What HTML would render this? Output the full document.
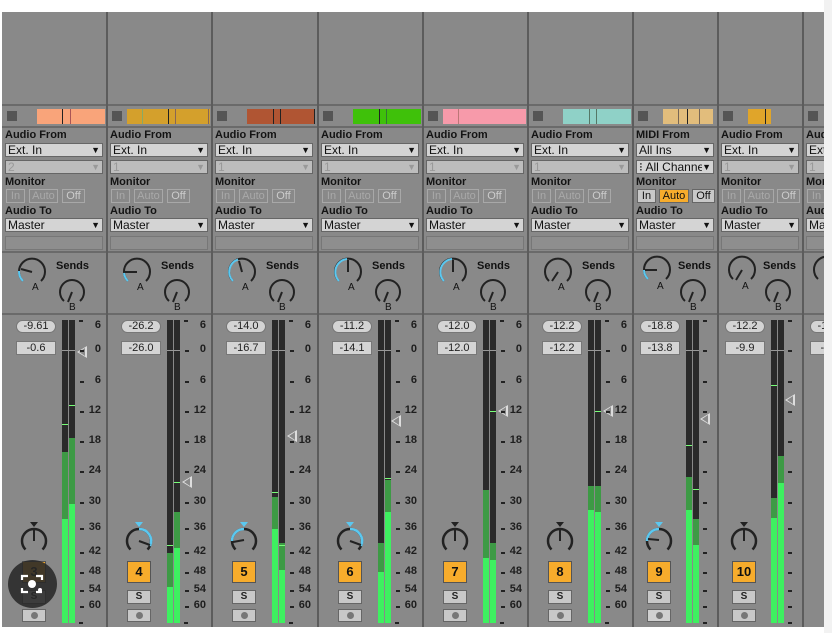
<!DOCTYPE html>
<html><head><meta charset="utf-8"><style>
*{margin:0;padding:0;box-sizing:border-box}
body{width:832px;height:633px;background:#fff;position:relative;overflow:hidden;font-family:"Liberation Sans",sans-serif}
#bg{position:absolute;left:2px;top:12px;width:822px;height:615px;background:#898989}
#rs{position:absolute;left:824px;top:0;width:8px;height:633px;background:#f2f2f2}
.col{position:absolute;top:0;height:627px;overflow:hidden}
.hl{position:absolute;left:2px;width:822px;height:2px;background:#6a6a6a}
.vl{position:absolute;top:12px;width:2px;height:615px;background:#5c5c5c}
.a{position:absolute}
.sq{position:absolute;left:5px;top:111px;width:10px;height:10px;background:#555}
.clip{position:absolute;top:109px;height:15px}
.clip i{position:absolute;top:0;width:1px;height:15px;background:#222}
.lb{position:absolute;left:3px;font:bold 11px "Liberation Sans",sans-serif;color:#141414;white-space:nowrap}
.dd{position:absolute;left:3px;width:98px;height:14px;background:#d4d4d4;border:1px solid #666;font:12px/12px "Liberation Sans",sans-serif;color:#111;padding-left:2px;white-space:nowrap;overflow:hidden}
.dd b{position:absolute;right:2px;top:0;font-size:9px;background:inherit}
.dis{background:#bdbdbd;color:#999}
.em{position:absolute;left:3px;top:236px;width:98px;height:14px;border:1px solid #777;background:#8e8e8e}
.bt{position:absolute;top:189px;height:14px;border:1px solid #a8a8a8;font:11px/12px "Liberation Sans",sans-serif;color:#a9a9a9;text-align:center}
.pill{position:absolute;left:14px;top:320px;width:40px;height:13px;border-radius:7px;background:#d4d4d4;border:1px solid #777;font:11px/11px "Liberation Sans",sans-serif;text-align:center;color:#222}
.box{position:absolute;left:14px;top:341px;width:40px;height:14px;background:#d4d4d4;border:1px solid #777;font:11px/12px "Liberation Sans",sans-serif;text-align:center;color:#222}
.m{position:absolute;top:320px;width:6px;height:303px;background:#2a2a2a;overflow:hidden}
.m .d{position:absolute;left:0;width:6px;bottom:0;background:#3d9a45}
.m .g{position:absolute;left:0;width:6px;bottom:0;background:#3ef060}
.m .p{position:absolute;left:0;width:6px;height:1px;background:#7f7}
.zl{position:absolute;top:350px;height:1px;background:#999}
.tk{position:absolute;width:4px;height:2px;background:#222}
.n{position:absolute;width:24px;text-align:right;font:bold 11px "Liberation Sans",sans-serif;color:#1e1e1e}
.num{position:absolute;left:20px;top:561px;width:24px;height:22px;background:#f7ac2c;border:1px solid #555;font:bold 13px/20px "Liberation Sans",sans-serif;text-align:center;color:#111}
.s{position:absolute;left:20px;top:590px;width:24px;height:14px;background:#c8c8c8;border:1px solid #666;font:bold 10px/12px "Liberation Sans",sans-serif;text-align:center;color:#222}
.r{position:absolute;left:20px;top:609px;width:24px;height:13px;background:#c8c8c8;border:1px solid #666}
.r:after{content:"";position:absolute;left:8px;top:2px;width:7px;height:7px;border-radius:50%;background:#777}
.tri{position:absolute;width:0;height:0;border-top:6px solid transparent;border-bottom:6px solid transparent;border-right:10px solid #ddd}
.tri:after{content:"";position:absolute;left:2px;top:-4px;border-top:4px solid transparent;border-bottom:4px solid transparent;border-right:6px solid #8a8a8a}
</style></head><body>
<div id="bg"></div><div id="rs"></div>

<div class="col" style="left:2px;width:105px">
<div class="sq"></div><div class="clip" style="left:35px;width:68px;background:#f9a47a"><i style="left:25px"></i><i style="left:33px;background:#a55"></i></div>
<div class="lb" style="top:129px">Audio From</div><div class="dd" style="top:143px">Ext. In<b>▼</b></div>
<div class="dd dis" style="top:160px">2<b>▼</b></div>
<div class="lb" style="top:176px">Monitor</div>
<div class="bt" style="left:4px;width:19px">In</div><div class="bt" style="left:27px;width:29px">Auto</div><div class="bt" style="left:60px;width:23px;color:#ccc">Off</div>
<div class="lb" style="top:205px">Audio To</div><div class="dd" style="top:218px">Master<b>▼</b></div><div class="em"></div>
<svg class="a" style="left:0;top:255px" width="105" height="58"><path d="M21 26 A13 13 0 1 1 39 26" fill="none" stroke="#222" stroke-width="2"/><path d="M21 26 A13 13 0 0 1 17 16" fill="none" stroke="#5bc8f0" stroke-width="2"/><line x1="30" y1="17" x2="19" y2="14" stroke="#222" stroke-width="2"/><text x="30" y="35" font-size="10" font-family="Liberation Sans" fill="#111">A</text><text x="54" y="14" font-size="11" font-weight="bold" font-family="Liberation Sans" fill="#111">Sends</text><path d="M62 46 A12 12 0 1 1 78 46" fill="none" stroke="#222" stroke-width="2"/><line x1="70" y1="37" x2="66" y2="47" stroke="#222" stroke-width="2"/><text x="67" y="55" font-size="10" font-family="Liberation Sans" fill="#111">B</text></svg>
<div class="pill">-9.61</div><div class="box">-0.6</div>
<div class="m" style="left:60px"><div class="d" style="height:171px"></div><div class="g" style="height:104px"></div><div class="p" style="top:104px"></div></div>
<div class="m" style="left:67px"><div class="d" style="height:185px"></div><div class="g" style="height:119px"></div><div class="p" style="top:85px"></div></div>
<div class="zl" style="left:60px;width:13px"></div><div class="tri" style="left:75px;top:346px"></div>
<div class="tk" style="left:77px;top:320px"></div><div class="tk" style="left:77px;top:622px"></div>
<div class="n" style="left:75px;top:319px">6</div><div class="tk" style="left:78px;top:350px"></div><div class="n" style="left:75px;top:343px">0</div><div class="tk" style="left:78px;top:381px"></div><div class="n" style="left:75px;top:374px">6</div><div class="tk" style="left:78px;top:411px"></div><div class="n" style="left:75px;top:404px">12</div><div class="tk" style="left:78px;top:441px"></div><div class="n" style="left:75px;top:434px">18</div><div class="tk" style="left:78px;top:471px"></div><div class="n" style="left:75px;top:464px">24</div><div class="tk" style="left:78px;top:502px"></div><div class="n" style="left:75px;top:495px">30</div><div class="tk" style="left:78px;top:528px"></div><div class="n" style="left:75px;top:521px">36</div><div class="tk" style="left:78px;top:552px"></div><div class="n" style="left:75px;top:545px">42</div><div class="tk" style="left:78px;top:572px"></div><div class="n" style="left:75px;top:565px">48</div><div class="tk" style="left:78px;top:590px"></div><div class="n" style="left:75px;top:583px">54</div><div class="tk" style="left:78px;top:606px"></div><div class="n" style="left:75px;top:599px">60</div>
<svg class="a" style="left:14px;top:516px" width="40" height="42"><polygon points="14,6 22,6 18,11" fill="#222"/><path d="M9.5 33.5 A12 12 0 1 1 26.5 33.5" fill="none" stroke="#222" stroke-width="2.5"/><line x1="18" y1="12" x2="18" y2="25" stroke="#222" stroke-width="2"/></svg>
<div class="num">3</div><div class="s">S</div><div class="r"></div>
</div>

<div class="col" style="left:107px;width:105px">
<div class="sq"></div><div class="clip" style="left:20px;width:83px;background:#d4a02c"><i style="left:15px;background:#8a6"></i><i style="left:41px"></i><i style="left:48px;background:#865"></i><i style="left:81px;background:#865"></i></div>
<div class="lb" style="top:129px">Audio From</div><div class="dd" style="top:143px">Ext. In<b>▼</b></div>
<div class="dd dis" style="top:160px">1<b>▼</b></div>
<div class="lb" style="top:176px">Monitor</div>
<div class="bt" style="left:4px;width:19px">In</div><div class="bt" style="left:27px;width:29px">Auto</div><div class="bt" style="left:60px;width:23px;color:#ccc">Off</div>
<div class="lb" style="top:205px">Audio To</div><div class="dd" style="top:218px">Master<b>▼</b></div><div class="em"></div>
<svg class="a" style="left:0;top:255px" width="105" height="58"><path d="M21 26 A13 13 0 1 1 39 26" fill="none" stroke="#222" stroke-width="2"/><path d="M21 26 A13 13 0 0 1 17 18" fill="none" stroke="#5bc8f0" stroke-width="2"/><line x1="30" y1="17" x2="18" y2="17" stroke="#222" stroke-width="2"/><text x="30" y="35" font-size="10" font-family="Liberation Sans" fill="#111">A</text><text x="54" y="14" font-size="11" font-weight="bold" font-family="Liberation Sans" fill="#111">Sends</text><path d="M62 46 A12 12 0 1 1 78 46" fill="none" stroke="#222" stroke-width="2"/><line x1="70" y1="37" x2="66" y2="47" stroke="#222" stroke-width="2"/><text x="67" y="55" font-size="10" font-family="Liberation Sans" fill="#111">B</text></svg>
<div class="pill">-26.2</div><div class="box">-26.0</div>
<div class="m" style="left:60px"><div class="d" style="height:70px"></div><div class="g" style="height:36px"></div><div class="p" style="top:225px"></div></div>
<div class="m" style="left:67px"><div class="d" style="height:111px"></div><div class="g" style="height:75px"></div><div class="p" style="top:162px"></div></div>
<div class="zl" style="left:60px;width:13px"></div><div class="tri" style="left:75px;top:476px"></div>
<div class="tk" style="left:77px;top:320px"></div><div class="tk" style="left:77px;top:622px"></div>
<div class="n" style="left:75px;top:319px">6</div><div class="tk" style="left:78px;top:350px"></div><div class="n" style="left:75px;top:343px">0</div><div class="tk" style="left:78px;top:381px"></div><div class="n" style="left:75px;top:374px">6</div><div class="tk" style="left:78px;top:411px"></div><div class="n" style="left:75px;top:404px">12</div><div class="tk" style="left:78px;top:441px"></div><div class="n" style="left:75px;top:434px">18</div><div class="tk" style="left:78px;top:471px"></div><div class="n" style="left:75px;top:464px">24</div><div class="tk" style="left:78px;top:502px"></div><div class="n" style="left:75px;top:495px">30</div><div class="tk" style="left:78px;top:528px"></div><div class="n" style="left:75px;top:521px">36</div><div class="tk" style="left:78px;top:552px"></div><div class="n" style="left:75px;top:545px">42</div><div class="tk" style="left:78px;top:572px"></div><div class="n" style="left:75px;top:565px">48</div><div class="tk" style="left:78px;top:590px"></div><div class="n" style="left:75px;top:583px">54</div><div class="tk" style="left:78px;top:606px"></div><div class="n" style="left:75px;top:599px">60</div>
<svg class="a" style="left:14px;top:516px" width="40" height="42"><polygon points="14,6 22,6 18,11" fill="#5bc8f0"/><path d="M9.5 33.5 A12 12 0 1 1 26.5 33.5" fill="none" stroke="#222" stroke-width="2.5"/><path d="M18 13 A12 12 0 0 1 29 30" fill="none" stroke="#5bc8f0" stroke-width="2.5"/><line x1="18" y1="25" x2="29" y2="29" stroke="#222" stroke-width="2"/></svg>
<div class="num">4</div><div class="s">S</div><div class="r"></div>
</div>

<div class="col" style="left:212px;width:106px">
<div class="sq"></div><div class="clip" style="left:35px;width:68px;background:#b05533"><i style="left:26px"></i><i style="left:33px"></i><i style="left:67px"></i></div>
<div class="lb" style="top:129px">Audio From</div><div class="dd" style="top:143px">Ext. In<b>▼</b></div>
<div class="dd dis" style="top:160px">1<b>▼</b></div>
<div class="lb" style="top:176px">Monitor</div>
<div class="bt" style="left:4px;width:19px">In</div><div class="bt" style="left:27px;width:29px">Auto</div><div class="bt" style="left:60px;width:23px;color:#ccc">Off</div>
<div class="lb" style="top:205px">Audio To</div><div class="dd" style="top:218px">Master<b>▼</b></div><div class="em"></div>
<svg class="a" style="left:0;top:255px" width="105" height="58"><path d="M21 26 A13 13 0 1 1 39 26" fill="none" stroke="#222" stroke-width="2"/><path d="M21 26 A13 13 0 0 1 26 4.5" fill="none" stroke="#5bc8f0" stroke-width="2"/><line x1="30" y1="17" x2="27" y2="6" stroke="#222" stroke-width="2"/><text x="30" y="35" font-size="10" font-family="Liberation Sans" fill="#111">A</text><text x="54" y="14" font-size="11" font-weight="bold" font-family="Liberation Sans" fill="#111">Sends</text><path d="M62 46 A12 12 0 1 1 78 46" fill="none" stroke="#222" stroke-width="2"/><line x1="70" y1="37" x2="66" y2="47" stroke="#222" stroke-width="2"/><text x="67" y="55" font-size="10" font-family="Liberation Sans" fill="#111">B</text></svg>
<div class="pill">-14.0</div><div class="box">-16.7</div>
<div class="m" style="left:60px"><div class="d" style="height:126px"></div><div class="g" style="height:94px"></div><div class="p" style="top:172px"></div></div>
<div class="m" style="left:67px"><div class="d" style="height:80px"></div><div class="g" style="height:53px"></div><div class="p" style="top:225px"></div></div>
<div class="zl" style="left:60px;width:13px"></div><div class="tri" style="left:75px;top:430px"></div>
<div class="tk" style="left:77px;top:320px"></div><div class="tk" style="left:77px;top:622px"></div>
<div class="n" style="left:75px;top:319px">6</div><div class="tk" style="left:78px;top:350px"></div><div class="n" style="left:75px;top:343px">0</div><div class="tk" style="left:78px;top:381px"></div><div class="n" style="left:75px;top:374px">6</div><div class="tk" style="left:78px;top:411px"></div><div class="n" style="left:75px;top:404px">12</div><div class="tk" style="left:78px;top:441px"></div><div class="n" style="left:75px;top:434px">18</div><div class="tk" style="left:78px;top:471px"></div><div class="n" style="left:75px;top:464px">24</div><div class="tk" style="left:78px;top:502px"></div><div class="n" style="left:75px;top:495px">30</div><div class="tk" style="left:78px;top:528px"></div><div class="n" style="left:75px;top:521px">36</div><div class="tk" style="left:78px;top:552px"></div><div class="n" style="left:75px;top:545px">42</div><div class="tk" style="left:78px;top:572px"></div><div class="n" style="left:75px;top:565px">48</div><div class="tk" style="left:78px;top:590px"></div><div class="n" style="left:75px;top:583px">54</div><div class="tk" style="left:78px;top:606px"></div><div class="n" style="left:75px;top:599px">60</div>
<svg class="a" style="left:14px;top:516px" width="40" height="42"><polygon points="14,6 22,6 18,11" fill="#5bc8f0"/><path d="M9.5 33.5 A12 12 0 1 1 26.5 33.5" fill="none" stroke="#222" stroke-width="2.5"/><path d="M18 13 A12 12 0 0 0 6 25" fill="none" stroke="#5bc8f0" stroke-width="2.5"/><line x1="18" y1="24" x2="7" y2="26" stroke="#222" stroke-width="2"/></svg>
<div class="num">5</div><div class="s">S</div><div class="r"></div>
</div>

<div class="col" style="left:318px;width:105px">
<div class="sq"></div><div class="clip" style="left:35px;width:68px;background:#3fc10a"><i style="left:26px"></i><i style="left:33px;background:#373"></i></div>
<div class="lb" style="top:129px">Audio From</div><div class="dd" style="top:143px">Ext. In<b>▼</b></div>
<div class="dd dis" style="top:160px">1<b>▼</b></div>
<div class="lb" style="top:176px">Monitor</div>
<div class="bt" style="left:4px;width:19px">In</div><div class="bt" style="left:27px;width:29px">Auto</div><div class="bt" style="left:60px;width:23px;color:#ccc">Off</div>
<div class="lb" style="top:205px">Audio To</div><div class="dd" style="top:218px">Master<b>▼</b></div><div class="em"></div>
<svg class="a" style="left:0;top:255px" width="105" height="58"><path d="M21 26 A13 13 0 1 1 39 26" fill="none" stroke="#222" stroke-width="2"/><path d="M21 26 A13 13 0 0 1 29 4" fill="none" stroke="#5bc8f0" stroke-width="2"/><line x1="30" y1="17" x2="30" y2="5" stroke="#222" stroke-width="2"/><text x="30" y="35" font-size="10" font-family="Liberation Sans" fill="#111">A</text><text x="54" y="14" font-size="11" font-weight="bold" font-family="Liberation Sans" fill="#111">Sends</text><path d="M62 46 A12 12 0 1 1 78 46" fill="none" stroke="#222" stroke-width="2"/><line x1="70" y1="37" x2="66" y2="47" stroke="#222" stroke-width="2"/><text x="67" y="55" font-size="10" font-family="Liberation Sans" fill="#111">B</text></svg>
<div class="pill">-11.2</div><div class="box">-14.1</div>
<div class="m" style="left:60px"><div class="d" style="height:80px"></div><div class="g" style="height:51px"></div></div>
<div class="m" style="left:67px"><div class="d" style="height:143px"></div><div class="g" style="height:111px"></div><div class="p" style="top:158px"></div></div>
<div class="zl" style="left:60px;width:13px"></div><div class="tri" style="left:73px;top:415px"></div>
<div class="tk" style="left:77px;top:320px"></div><div class="tk" style="left:77px;top:622px"></div>
<div class="n" style="left:75px;top:319px">6</div><div class="tk" style="left:78px;top:350px"></div><div class="n" style="left:75px;top:343px">0</div><div class="tk" style="left:78px;top:381px"></div><div class="n" style="left:75px;top:374px">6</div><div class="tk" style="left:78px;top:411px"></div><div class="n" style="left:75px;top:404px">12</div><div class="tk" style="left:78px;top:441px"></div><div class="n" style="left:75px;top:434px">18</div><div class="tk" style="left:78px;top:471px"></div><div class="n" style="left:75px;top:464px">24</div><div class="tk" style="left:78px;top:502px"></div><div class="n" style="left:75px;top:495px">30</div><div class="tk" style="left:78px;top:528px"></div><div class="n" style="left:75px;top:521px">36</div><div class="tk" style="left:78px;top:552px"></div><div class="n" style="left:75px;top:545px">42</div><div class="tk" style="left:78px;top:572px"></div><div class="n" style="left:75px;top:565px">48</div><div class="tk" style="left:78px;top:590px"></div><div class="n" style="left:75px;top:583px">54</div><div class="tk" style="left:78px;top:606px"></div><div class="n" style="left:75px;top:599px">60</div>
<svg class="a" style="left:14px;top:516px" width="40" height="42"><polygon points="14,6 22,6 18,11" fill="#5bc8f0"/><path d="M9.5 33.5 A12 12 0 1 1 26.5 33.5" fill="none" stroke="#222" stroke-width="2.5"/><path d="M18 13 A12 12 0 0 1 29 30" fill="none" stroke="#5bc8f0" stroke-width="2.5"/><line x1="18" y1="25" x2="29" y2="29" stroke="#222" stroke-width="2"/></svg>
<div class="num">6</div><div class="s">S</div><div class="r"></div>
</div>

<div class="col" style="left:423px;width:105px">
<div class="sq"></div><div class="clip" style="left:20px;width:83px;background:#f79aaa"><i style="left:15px;background:#b77"></i></div>
<div class="lb" style="top:129px">Audio From</div><div class="dd" style="top:143px">Ext. In<b>▼</b></div>
<div class="dd dis" style="top:160px">1<b>▼</b></div>
<div class="lb" style="top:176px">Monitor</div>
<div class="bt" style="left:4px;width:19px">In</div><div class="bt" style="left:27px;width:29px">Auto</div><div class="bt" style="left:60px;width:23px;color:#ccc">Off</div>
<div class="lb" style="top:205px">Audio To</div><div class="dd" style="top:218px">Master<b>▼</b></div><div class="em"></div>
<svg class="a" style="left:0;top:255px" width="105" height="58"><path d="M21 26 A13 13 0 1 1 39 26" fill="none" stroke="#222" stroke-width="2"/><path d="M21 26 A13 13 0 0 1 29 4" fill="none" stroke="#5bc8f0" stroke-width="2"/><line x1="30" y1="17" x2="30" y2="5" stroke="#222" stroke-width="2"/><text x="30" y="35" font-size="10" font-family="Liberation Sans" fill="#111">A</text><text x="54" y="14" font-size="11" font-weight="bold" font-family="Liberation Sans" fill="#111">Sends</text><path d="M62 46 A12 12 0 1 1 78 46" fill="none" stroke="#222" stroke-width="2"/><line x1="70" y1="37" x2="66" y2="47" stroke="#222" stroke-width="2"/><text x="67" y="55" font-size="10" font-family="Liberation Sans" fill="#111">B</text></svg>
<div class="pill">-12.0</div><div class="box">-12.0</div>
<div class="m" style="left:60px"><div class="d" style="height:133px"></div><div class="g" style="height:65px"></div></div>
<div class="m" style="left:67px"><div class="d" style="height:80px"></div><div class="g" style="height:63px"></div><div class="p" style="top:91px"></div></div>
<div class="zl" style="left:60px;width:13px"></div><div class="tri" style="left:75px;top:405px"></div>
<div class="tk" style="left:77px;top:320px"></div><div class="tk" style="left:77px;top:622px"></div>
<div class="n" style="left:75px;top:319px">6</div><div class="tk" style="left:78px;top:350px"></div><div class="n" style="left:75px;top:343px">0</div><div class="tk" style="left:78px;top:381px"></div><div class="n" style="left:75px;top:374px">6</div><div class="tk" style="left:78px;top:411px"></div><div class="n" style="left:75px;top:404px">12</div><div class="tk" style="left:78px;top:441px"></div><div class="n" style="left:75px;top:434px">18</div><div class="tk" style="left:78px;top:471px"></div><div class="n" style="left:75px;top:464px">24</div><div class="tk" style="left:78px;top:502px"></div><div class="n" style="left:75px;top:495px">30</div><div class="tk" style="left:78px;top:528px"></div><div class="n" style="left:75px;top:521px">36</div><div class="tk" style="left:78px;top:552px"></div><div class="n" style="left:75px;top:545px">42</div><div class="tk" style="left:78px;top:572px"></div><div class="n" style="left:75px;top:565px">48</div><div class="tk" style="left:78px;top:590px"></div><div class="n" style="left:75px;top:583px">54</div><div class="tk" style="left:78px;top:606px"></div><div class="n" style="left:75px;top:599px">60</div>
<svg class="a" style="left:14px;top:516px" width="40" height="42"><polygon points="14,6 22,6 18,11" fill="#222"/><path d="M9.5 33.5 A12 12 0 1 1 26.5 33.5" fill="none" stroke="#222" stroke-width="2.5"/><line x1="18" y1="12" x2="18" y2="25" stroke="#222" stroke-width="2"/></svg>
<div class="num">7</div><div class="s">S</div><div class="r"></div>
</div>

<div class="col" style="left:528px;width:105px">
<div class="sq"></div><div class="clip" style="left:35px;width:68px;background:#8fd1c7"><i style="left:26px;background:#576"></i><i style="left:33px;background:#576"></i></div>
<div class="lb" style="top:129px">Audio From</div><div class="dd" style="top:143px">Ext. In<b>▼</b></div>
<div class="dd dis" style="top:160px">1<b>▼</b></div>
<div class="lb" style="top:176px">Monitor</div>
<div class="bt" style="left:4px;width:19px">In</div><div class="bt" style="left:27px;width:29px">Auto</div><div class="bt" style="left:60px;width:23px;color:#ccc">Off</div>
<div class="lb" style="top:205px">Audio To</div><div class="dd" style="top:218px">Master<b>▼</b></div><div class="em"></div>
<svg class="a" style="left:0;top:255px" width="105" height="58"><path d="M21 26 A13 13 0 1 1 39 26" fill="none" stroke="#222" stroke-width="2"/><line x1="30" y1="17" x2="24" y2="26" stroke="#222" stroke-width="2"/><text x="30" y="35" font-size="10" font-family="Liberation Sans" fill="#111">A</text><text x="54" y="14" font-size="11" font-weight="bold" font-family="Liberation Sans" fill="#111">Sends</text><path d="M62 46 A12 12 0 1 1 78 46" fill="none" stroke="#222" stroke-width="2"/><line x1="70" y1="37" x2="66" y2="47" stroke="#222" stroke-width="2"/><text x="67" y="55" font-size="10" font-family="Liberation Sans" fill="#111">B</text></svg>
<div class="pill">-12.2</div><div class="box">-12.2</div>
<div class="m" style="left:60px"><div class="d" style="height:137px"></div><div class="g" style="height:113px"></div></div>
<div class="m" style="left:67px"><div class="d" style="height:137px"></div><div class="g" style="height:111px"></div><div class="p" style="top:91px"></div></div>
<div class="zl" style="left:60px;width:13px"></div><div class="tri" style="left:75px;top:405px"></div>
<div class="tk" style="left:77px;top:320px"></div><div class="tk" style="left:77px;top:622px"></div>
<div class="n" style="left:75px;top:319px">6</div><div class="tk" style="left:78px;top:350px"></div><div class="n" style="left:75px;top:343px">0</div><div class="tk" style="left:78px;top:381px"></div><div class="n" style="left:75px;top:374px">6</div><div class="tk" style="left:78px;top:411px"></div><div class="n" style="left:75px;top:404px">12</div><div class="tk" style="left:78px;top:441px"></div><div class="n" style="left:75px;top:434px">18</div><div class="tk" style="left:78px;top:471px"></div><div class="n" style="left:75px;top:464px">24</div><div class="tk" style="left:78px;top:502px"></div><div class="n" style="left:75px;top:495px">30</div><div class="tk" style="left:78px;top:528px"></div><div class="n" style="left:75px;top:521px">36</div><div class="tk" style="left:78px;top:552px"></div><div class="n" style="left:75px;top:545px">42</div><div class="tk" style="left:78px;top:572px"></div><div class="n" style="left:75px;top:565px">48</div><div class="tk" style="left:78px;top:590px"></div><div class="n" style="left:75px;top:583px">54</div><div class="tk" style="left:78px;top:606px"></div><div class="n" style="left:75px;top:599px">60</div>
<svg class="a" style="left:14px;top:516px" width="40" height="42"><polygon points="14,6 22,6 18,11" fill="#222"/><path d="M9.5 33.5 A12 12 0 1 1 26.5 33.5" fill="none" stroke="#222" stroke-width="2.5"/><line x1="18" y1="12" x2="18" y2="25" stroke="#222" stroke-width="2"/></svg>
<div class="num">8</div><div class="s">S</div><div class="r"></div>
</div>

<div class="col" style="left:633px;width:85px">
<div class="sq"></div><div class="clip" style="left:30px;width:50px;background:#e2bd7c"><i style="left:15px;background:#765"></i><i style="left:24px"></i><i style="left:36px;background:#765"></i></div>
<div class="lb" style="top:129px">MIDI From</div><div class="dd" style="top:143px;width:78px">All Ins<b>▼</b></div>
<div class="dd" style="top:160px;width:78px">⁝ All Channe<b>▼</b></div>
<div class="lb" style="top:176px">Monitor</div>
<div class="bt" style="left:4px;width:19px;color:#111;background:#c8c8c8;border-color:#666">In</div><div class="bt" style="left:26px;width:30px;color:#111;background:#f7ac2c;border-color:#666">Auto</div><div class="bt" style="left:59px;width:23px;color:#111;background:#c8c8c8;border-color:#666">Off</div>
<div class="lb" style="top:205px">Audio To</div><div class="dd" style="top:218px;width:78px">Master<b>▼</b></div><div class="em" style="width:78px"></div>
<svg class="a" style="left:0;top:255px" width="85" height="58"><path d="M15 24 A13 13 0 1 1 33 24" fill="none" stroke="#222" stroke-width="2"/><path d="M15 24 A13 13 0 0 1 11 15" fill="none" stroke="#5bc8f0" stroke-width="2"/><line x1="24" y1="15" x2="12" y2="15" stroke="#222" stroke-width="2"/><text x="24" y="34" font-size="10" font-family="Liberation Sans" fill="#111">A</text><text x="45" y="14" font-size="11" font-weight="bold" font-family="Liberation Sans" fill="#111">Sends</text><path d="M52 46 A12 12 0 1 1 68 46" fill="none" stroke="#222" stroke-width="2"/><line x1="60" y1="37" x2="56" y2="47" stroke="#222" stroke-width="2"/><text x="57" y="55" font-size="10" font-family="Liberation Sans" fill="#111">B</text></svg>
<div class="pill" style="left:7px">-18.8</div><div class="box" style="left:7px">-13.8</div>
<div class="m" style="left:53px"><div class="d" style="height:146px"></div><div class="g" style="height:113px"></div><div class="p" style="top:125px"></div></div>
<div class="m" style="left:60px"><div class="d" style="height:104px"></div><div class="g" style="height:78px"></div><div class="p" style="top:169px"></div></div>
<div class="zl" style="left:53px;width:13px"></div><div class="tri" style="left:67px;top:413px"></div>
<div class="tk" style="left:70px;top:320px"></div><div class="tk" style="left:70px;top:350px"></div><div class="tk" style="left:70px;top:381px"></div><div class="tk" style="left:70px;top:411px"></div><div class="tk" style="left:70px;top:441px"></div><div class="tk" style="left:70px;top:471px"></div><div class="tk" style="left:70px;top:502px"></div><div class="tk" style="left:70px;top:528px"></div><div class="tk" style="left:70px;top:552px"></div><div class="tk" style="left:70px;top:572px"></div><div class="tk" style="left:70px;top:590px"></div><div class="tk" style="left:70px;top:606px"></div><div class="tk" style="left:70px;top:622px"></div>
<svg class="a" style="left:8px;top:516px" width="40" height="42"><polygon points="14,6 22,6 18,11" fill="#5bc8f0"/><path d="M9.5 33.5 A12 12 0 1 1 26.5 33.5" fill="none" stroke="#222" stroke-width="2.5"/><path d="M18 13 A12 12 0 0 0 6 25" fill="none" stroke="#5bc8f0" stroke-width="2.5"/><line x1="18" y1="24" x2="7" y2="23" stroke="#222" stroke-width="2"/></svg>
<div class="num" style="left:14px">9</div><div class="s" style="left:14px">S</div><div class="r" style="left:14px;background:#d0d0d0"></div>
</div>

<div class="col" style="left:718px;width:85px">
<div class="sq"></div><div class="clip" style="left:30px;width:23px;background:#e0a52a"><i style="left:17px"></i></div>
<div class="lb" style="top:129px">Audio From</div><div class="dd" style="top:143px;width:78px">Ext. In<b>▼</b></div>
<div class="dd dis" style="top:160px;width:78px">1<b>▼</b></div>
<div class="lb" style="top:176px">Monitor</div>
<div class="bt" style="left:4px;width:19px">In</div><div class="bt" style="left:26px;width:30px">Auto</div><div class="bt" style="left:59px;width:23px;color:#ccc">Off</div>
<div class="lb" style="top:205px">Audio To</div><div class="dd" style="top:218px;width:78px">Master<b>▼</b></div><div class="em" style="width:78px"></div>
<svg class="a" style="left:0;top:255px" width="85" height="58"><path d="M15 24 A13 13 0 1 1 33 24" fill="none" stroke="#222" stroke-width="2"/><line x1="24" y1="15" x2="18" y2="25" stroke="#222" stroke-width="2"/><text x="24" y="34" font-size="10" font-family="Liberation Sans" fill="#111">A</text><text x="45" y="14" font-size="11" font-weight="bold" font-family="Liberation Sans" fill="#111">Sends</text><path d="M52 46 A12 12 0 1 1 68 46" fill="none" stroke="#222" stroke-width="2"/><line x1="60" y1="37" x2="56" y2="47" stroke="#222" stroke-width="2"/><text x="57" y="55" font-size="10" font-family="Liberation Sans" fill="#111">B</text></svg>
<div class="pill" style="left:7px">-12.2</div><div class="box" style="left:7px">-9.9</div>
<div class="m" style="left:53px"><div class="d" style="height:125px"></div><div class="g" style="height:105px"></div><div class="p" style="top:65px"></div></div>
<div class="m" style="left:60px"><div class="d" style="height:167px"></div><div class="g" style="height:140px"></div><div class="p" style="top:-8px"></div></div>
<div class="zl" style="left:53px;width:13px"></div><div class="tri" style="left:67px;top:394px"></div>
<div class="tk" style="left:70px;top:320px"></div><div class="tk" style="left:70px;top:350px"></div><div class="tk" style="left:70px;top:381px"></div><div class="tk" style="left:70px;top:411px"></div><div class="tk" style="left:70px;top:441px"></div><div class="tk" style="left:70px;top:471px"></div><div class="tk" style="left:70px;top:502px"></div><div class="tk" style="left:70px;top:528px"></div><div class="tk" style="left:70px;top:552px"></div><div class="tk" style="left:70px;top:572px"></div><div class="tk" style="left:70px;top:590px"></div><div class="tk" style="left:70px;top:606px"></div><div class="tk" style="left:70px;top:622px"></div>
<svg class="a" style="left:8px;top:516px" width="40" height="42"><polygon points="14,6 22,6 18,11" fill="#222"/><path d="M9.5 33.5 A12 12 0 1 1 26.5 33.5" fill="none" stroke="#222" stroke-width="2.5"/><line x1="18" y1="12" x2="18" y2="25" stroke="#222" stroke-width="2"/></svg>
<div class="num" style="left:14px">10</div><div class="s" style="left:14px">S</div><div class="r" style="left:14px"></div>
</div>

<div class="col" style="left:803px;width:21px">
<div class="sq"></div><div class="clip" style="left:30px;width:20px;background:#a0bd30"></div>
<div class="lb" style="top:129px">Audio From</div><div class="dd" style="top:143px">Ext. In<b>▼</b></div>
<div class="dd dis" style="top:160px">1<b>▼</b></div>
<div class="lb" style="top:176px">Monitor</div>
<div class="bt" style="left:4px;width:19px">In</div>
<div class="lb" style="top:205px">Audio To</div><div class="dd" style="top:218px">Master<b>▼</b></div><div class="em"></div>
<svg class="a" style="left:0;top:255px" width="40" height="58"><path d="M15 24 A13 13 0 1 1 33 24" fill="none" stroke="#222" stroke-width="2"/></svg>
<div class="pill" style="left:7px">-12.2</div><div class="box" style="left:7px">-9.9</div>
</div>

<div class="hl" style="top:104px"></div><div class="hl" style="top:126px"></div><div class="hl" style="top:251px"></div><div class="hl" style="top:313px"></div>
<div class="vl" style="left:106px"></div><div class="vl" style="left:211px"></div><div class="vl" style="left:317px"></div><div class="vl" style="left:422px"></div><div class="vl" style="left:527px"></div><div class="vl" style="left:632px"></div><div class="vl" style="left:717px"></div><div class="vl" style="left:802px"></div>

<div class="a" style="left:8px;top:560px;width:49px;height:48px;border-radius:50%;background:rgba(40,40,40,0.88)"></div>
<svg class="a" style="left:19px;top:571px" width="26" height="26"><path d="M3 9 V5 H9 M17 5 H23 V9 M3 17 V21 H9 M17 21 H23" fill="none" stroke="#fff" stroke-width="2.2"/><circle cx="13" cy="13" r="4" fill="#fff"/><circle cx="21" cy="19" r="2" fill="#fff"/></svg>
</body></html>
